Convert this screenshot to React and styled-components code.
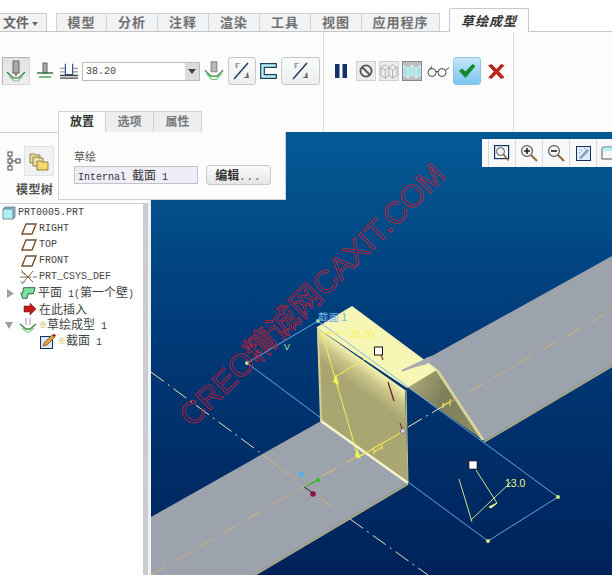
import React from "react";
import styled, { createGlobalStyle } from "styled-components";

const GlobalStyle = createGlobalStyle`
  html, body { margin: 0; padding: 0; background: #fcfcfc; }
  body { width: 612px; height: 575px; overflow: hidden; font-family: "Liberation Mono", "Noto Sans CJK SC", monospace; }
`;

const Page = styled.div`
  position: relative;
  width: 612px;
  height: 575px;
  display: flex;
  flex-direction: column;
  overflow: hidden;
`;

/* top ribbon tabs */
const TabStrip = styled.div`
  height: 32px;
  box-sizing: border-box;
  display: flex;
  align-items: flex-end;
  border-bottom: 1px solid #c4c6c8;
  background: #fff;
`;

const FileTab = styled.div`
  width: 47px;
  height: 19px;
  margin-bottom: -1px;
  margin-right: 9px;
  box-sizing: border-box;
  border: 1px solid #c8cacc;
  border-left: 0;
  border-bottom-color: #c4c6c8;
  background: #f3f3f3;
  color: #666;
  font: 700 13px "Noto Sans CJK SC", sans-serif;
  line-height: 16px;
  padding-left: 3px;
  white-space: nowrap;
`;

const Caret = styled.span`
  display: inline-block;
  width: 0;
  height: 0;
  margin-left: 3px;
  vertical-align: 1px;
  border-left: 3px solid transparent;
  border-right: 3px solid transparent;
  border-top: 4px solid #666;
`;

const Tab = styled.div`
  width: ${(p) => p.$w || 51}px;
  height: 19px;
  margin-bottom: -1px;
  box-sizing: border-box;
  border: 1px solid #d0d2d4;
  border-left-width: ${(p) => (p.$first ? 1 : 0)}px;
  border-bottom-color: #c4c6c8;
  background: #f1f2f3;
  color: #707070;
  text-align: center;
  font: 700 13px/16px "Noto Sans CJK SC", sans-serif;
  letter-spacing: 1px;
`;

const ActiveTab = styled.div`
  width: 80px;
  height: 24px;
  margin-left: 9px;
  margin-bottom: -1px;
  box-sizing: border-box;
  border: 1px solid #c8cacc;
  border-bottom: 0;
  border-radius: 2px 2px 0 0;
  background: #fcfcfc;
  color: #333;
  text-align: center;
  font: italic 700 13px/24px "Noto Sans CJK SC", sans-serif;
  letter-spacing: 1px;
`;

/* ribbon */
const Ribbon = styled.div`
  height: 100px;
  box-sizing: border-box;
  display: flex;
  background: #fcfcfc;
`;

const LeftGroup = styled.div`
  width: 324px;
  box-sizing: border-box;
  border-right: 1px solid #d8dadc;
  display: flex;
  flex-direction: column;
  justify-content: space-between;
`;

const RightGroup = styled.div`
  width: 190px;
  box-sizing: border-box;
  border-right: 1px solid #d8dadc;
  padding: 25px 0 0 7px;
  display: flex;
  align-items: flex-start;
  gap: 3px;
`;

const Controls = styled.div`
  display: flex;
  gap: 4px;
  padding: 25px 0 0 2px;
`;

const Slot = styled.div`
  width: ${(p) => p.$w}px;
  height: 28px;
  display: flex;
  align-items: center;
  justify-content: center;
`;

const RibbonButton = styled.div`
  width: ${(p) => p.$w || 28}px;
  height: 28px;
  box-sizing: border-box;
  display: flex;
  align-items: center;
  justify-content: center;
  border: 1px solid #c6c8ca;
  border-radius: 3px;
  background: linear-gradient(#fafafa, #eceeef);
`;

const PressedButton = styled(RibbonButton)`
  border-radius: 0;
  border-color: #b4b4b4 #d8d8d8 #d8d8d8 #b4b4b4;
  background: linear-gradient(#e2e2e2, #eeeeee);
`;

const OkButton = styled(RibbonButton)`
  border-color: #8cc6ea;
  background: linear-gradient(#c6e6f8, #7cc4ee);
`;

const SquareToggle = styled.div`
  width: 20px;
  height: 20px;
  margin-top: 4px;
  box-sizing: border-box;
  display: flex;
  align-items: center;
  justify-content: center;
  border: 1px solid ${(p) => (p.$on ? "#8a8a8a" : "#d0d0d0")};
  background: ${(p) => (p.$on ? "#bcbcbc" : "#ececec")};
`;

const Combo = styled.div`
  width: 118px;
  height: 19px;
  margin-top: 5px;
  box-sizing: border-box;
  display: flex;
  border: 1px solid #bcbcbc;
  background: #fff;
`;

const ComboValue = styled.div`
  flex: 1;
  padding-left: 3px;
  color: #444;
  font: 10px/17px "Liberation Mono", monospace;
`;

const ComboArrow = styled.div`
  width: 14px;
  display: flex;
  align-items: center;
  justify-content: center;
  background: #dcdcdc;
`;

const SubTabs = styled.div`
  display: flex;
  margin-left: 58px;
  height: 21px;
`;

const SubTab = styled.div`
  width: 48px;
  box-sizing: border-box;
  text-align: center;
  border: 1px solid #cfd1d3;
  border-left-width: ${(p) => (p.$active ? 1 : 0)}px;
  border-bottom: 0;
  background: ${(p) => (p.$active ? "#fcfcfc" : "#eceeef")};
  color: ${(p) => (p.$active ? "#333" : "#777")};
  font: 700 12px/17px "Noto Sans CJK SC", sans-serif;
`;

/* lower area */
const Main = styled.div`
  flex: 1;
  display: flex;
  min-height: 0;
`;

const Sidebar = styled.div`
  width: 151px;
  box-sizing: border-box;
  display: flex;
  flex-direction: column;
  background: #fcfcfc;
  border-top: 1px solid #cfd1d3;
  border-right: 3px solid #eef0f1;
`;

const SideTabs = styled.div`
  height: 30px;
  margin-top: 13px;
  display: flex;
  padding-left: 3px;
`;

const SideTab = styled.div`
  width: ${(p) => p.$w}px;
  display: flex;
  align-items: center;
  justify-content: center;
  box-sizing: border-box;
  background: ${(p) => (p.$muted ? "#f0f1f2" : "transparent")};
  border: ${(p) => (p.$muted ? "1px solid #e0e2e4" : "0")};
`;

const SideTitle = styled.div`
  height: 28px;
  padding-left: 16px;
  box-sizing: border-box;
  color: #555;
  font: 700 12px/26px "Noto Sans CJK SC", sans-serif;
  letter-spacing: 0.4px;
  border-bottom: 1px solid #cfd1d3;
`;

const TreePane = styled.div`
  flex: 1;
  background: #fff;
  padding-top: 1px;
  border-right: 5px solid #c9cdd1;
`;

const TreeRow = styled.div`
  height: 16px;
  display: flex;
  align-items: center;
  gap: 2px;
  padding-left: ${(p) => p.$indent}px;
  color: #444;
  font: 10px/16px "Liberation Mono", monospace;
  white-space: pre;
`;

const Cjk = styled.span`
  font: 12px/16px "Noto Sans CJK SC", sans-serif;
`;

const Asterisk = styled.span`
  margin-right: -2px;
  color: #b39d00;
  font: 700 8px/16px "Noto Sans CJK SC", sans-serif;
`;

const ExpanderGap = styled.span`
  width: 1px;
`;

const Viewport = styled.div`
  position: relative;
  flex: 1;
  background: linear-gradient(#045a95, #003a78 45%, #00225a);
`;

const Scene = styled.svg`
  display: block;
`;

const ViewBar = styled.div`
  position: absolute;
  top: 7px;
  left: 331px;
  width: 130px;
  height: 28px;
  box-sizing: border-box;
  display: flex;
  padding-left: 6px;
  background: #f6f8f9;
`;

const ViewBtn = styled.div`
  width: 27px;
  box-sizing: border-box;
  display: flex;
  align-items: center;
  justify-content: center;
  border-left: 1px solid #d6d8da;
  flex-shrink: 0;
`;

/* dialog panel over the canvas */
const Popup = styled.div`
  position: absolute;
  left: 58px;
  top: 132px;
  width: 228px;
  height: 68px;
  box-sizing: border-box;
  border: 1px solid #cfd1d3;
  border-top: 0;
  background: #fcfcfc;
  padding: 17px 0 0 15px;
`;

const FieldLabel = styled.div`
  color: #555;
  font: 11px/15px "Noto Sans CJK SC", sans-serif;
`;

const FieldRow = styled.div`
  display: flex;
  align-items: center;
  gap: 8px;
  margin-top: 1px;
`;

const SectionField = styled.div`
  width: 124px;
  height: 18px;
  box-sizing: border-box;
  border: 1px solid #c2c2c8;
  background: #f0ecf8;
  color: #333;
  padding-left: 3px;
  font: 10px/16px "Liberation Mono", monospace;
  white-space: nowrap;
`;

const EditButton = styled.div`
  width: 65px;
  height: 20px;
  box-sizing: border-box;
  border: 1px solid #c8c8c8;
  border-radius: 3px;
  background: linear-gradient(#fafafa, #e6e6e6);
  color: #333;
  text-align: center;
  font: 700 12px/17px "Noto Sans CJK SC", sans-serif;
`;

const Dots = styled.span`
  font: 10px/17px "Liberation Mono", monospace;
  letter-spacing: 1.5px;
`;

const BendIcon = ({ size = 24 }) => (
  <svg width={size} height={size} viewBox="0 0 24 24" fill="none">
    <rect x="8.5" y="1" width="7" height="12" fill="#b8b8b8" stroke="#777" />
    <path d="M1 11l7 7h8l7-7" stroke="#2f8a3e" strokeWidth="1.5" />
    <path d="M3 15l6 7h6l6-7" stroke="#7cd07c" strokeWidth="1.5" />
  </svg>
);

const PressedBend = () => (
  <svg width="24" height="24" viewBox="0 0 24 24" fill="none">
    <rect x="9" y="2" width="6" height="12" fill="#a8a8a8" stroke="#666" />
    <path d="M12 14v3" stroke="#333" />
    <path d="M3 13l6 6h6l6-6" stroke="#2f7a3e" strokeWidth="1.2" />
    <path d="M5 17l5 5h4l5-5" stroke="#7cd07c" strokeWidth="1.2" />
  </svg>
);

const BendLineIcon = () => (
  <svg width="18" height="18" viewBox="0 0 18 18" fill="none">
    <rect x="7" y="1" width="4" height="10" fill="#aaa" stroke="#666" />
    <path d="M1 11h16" stroke="#2c6b3a" strokeWidth="1.4" />
    <path d="M3 15h12" stroke="#4aa04f" strokeWidth="1.4" />
  </svg>
);

const BendBlockIcon = () => (
  <svg width="20" height="18" viewBox="0 0 20 18" fill="none">
    <path d="M6 1v12h8V1" stroke="#2f4f8f" strokeWidth="1.3" />
    <path d="M0 6h6M14 6h6M0 10h6M14 10h6" stroke="#777" />
    <path d="M0 14h20M0 17h20" stroke="#444" strokeWidth="1.4" />
  </svg>
);

const FlipIcon = () => (
  <svg width="18" height="18" viewBox="0 0 18 18" fill="none">
    <path d="M1 17L15 1" stroke="#17305f" strokeWidth="1.4" />
    <path d="M2 1h6L3 3zM2 1l1 6 2-3z" fill="#999" />
    <path d="M16 16h-6l4-2zM16 16l-1-6-2 3z" fill="#666" />
  </svg>
);

const ChannelIcon = () => (
  <svg width="17" height="16" viewBox="0 0 17 16">
    <path d="M.7.7h15.6v3.6H4.3v7.4h12v3.6H.7z" fill="#bdeef2" stroke="#17405f" strokeWidth="1.2" />
  </svg>
);

const PauseIcon = () => (
  <svg width="22" height="14" viewBox="0 0 22 14">
    <rect x="4" y="0" width="4.5" height="14" fill="#12306e" />
    <rect x="11.5" y="0" width="4.5" height="14" fill="#12306e" />
  </svg>
);

const BanIcon = () => (
  <svg width="14" height="14" viewBox="0 0 14 14" fill="none" stroke="#555" strokeWidth="1.8">
    <circle cx="7" cy="7" r="5.6" />
    <path d="M3 3l8 8" />
  </svg>
);

const BoxesIcon = () => (
  <svg width="20" height="18" viewBox="0 0 20 18" fill="none" stroke="#999" strokeWidth="0.8">
    <path d="M1 5l5-3 4 3 4-3 5 3v9l-5 3-4-3-4 3-5-3z" />
    <path d="M1 5l5 3 4-3 4 3 5-3M6 8v9M14 8v9M10 5v9" />
  </svg>
);

const BoxesOnIcon = () => (
  <svg width="18" height="16" viewBox="0 0 18 16" stroke="#f2f6f6" strokeWidth="0.7">
    <path d="M0 2l5 3 4-3 4 3 5-3v10l-5 3-4-3-4 3-5-3z" fill="#a9e2e6" />
    <path d="M5 5v10M13 5v10M9 2v10" fill="none" />
  </svg>
);

const GlassesIcon = () => (
  <svg width="22" height="12" viewBox="0 0 22 12" fill="none" stroke="#333" strokeWidth="0.9">
    <circle cx="5" cy="7.5" r="4" />
    <circle cx="15" cy="7.5" r="4" />
    <path d="M9 7q1-1.5 2 0M3 4l2-3M19 5l3-2.5" />
  </svg>
);

const CheckIcon = () => (
  <svg width="18" height="14" viewBox="0 0 18 14">
    <path d="M1 7l3-2.5 3.5 3L14.5 0 17.5 2 7.5 14z" fill="#108a2c" />
  </svg>
);

const CrossIcon = () => (
  <svg width="17" height="15" viewBox="0 0 17 15">
    <path d="M0 1.5L3.5 0l5 5L13 0l3.6 1.2L11 7.3l5.5 6.2-3.6 1.5-4.6-5L3.6 15 .2 13.6 5.8 7.4z" fill="#b8261c" />
  </svg>
);

const SmallArrow = () => (
  <svg width="8" height="5" viewBox="0 0 8 5">
    <path d="M0 0h8L4 5z" fill="#444" />
  </svg>
);

const TreeTabIcon = () => (
  <svg width="14" height="20" viewBox="0 0 14 20" fill="#fff" stroke="#444">
    <rect x="1" y="1" width="4" height="4" />
    <rect x="1" y="8" width="4" height="4" />
    <rect x="1" y="15" width="4" height="4" />
    <rect x="9" y="8" width="4" height="4" />
    <path d="M3 5v3M3 12v3M5 10h4" fill="none" />
  </svg>
);

const FolderTabIcon = () => (
  <svg width="20" height="20" viewBox="0 0 20 20" stroke="#7a6a30" strokeWidth="0.8">
    <path d="M1 3h5l1 1h4v8H1z" fill="#e8dca0" />
    <path d="M4 6h5l1 1h4v8H4z" fill="#efe4a8" />
    <path d="M8 10h4l1 1h6v8H8z" fill="#f4d86c" />
  </svg>
);

const PartIcon = () => (
  <svg width="14" height="14" viewBox="0 0 14 14" stroke="#5a7a86" strokeWidth="0.8">
    <path d="M1 3l2-2h10v10l-2 2z" fill="#8fb8c0" />
    <path d="M1 3h10v10H1z" fill="#aef0f6" />
  </svg>
);

const PlaneIcon = () => (
  <svg width="16" height="12" viewBox="0 0 16 12" fill="#fff" stroke="#7a5230" strokeWidth="1.4">
    <path d="M5 1h10l-4 10H1z" />
  </svg>
);

const CsysIcon = () => (
  <svg width="18" height="16" viewBox="0 0 18 16" fill="none" strokeWidth="0.9">
    <path d="M2 1l12 12M14 2L3 15M1 8h11" stroke="#7a5230" />
    <path d="M1 13h5M2 3l4 3" stroke="#999" />
    <path d="M14 8l4 0" stroke="#666" />
  </svg>
);

const Expander = ({ open }) => (
  <svg width="9" height="9" viewBox="0 0 9 9">
    <path d={open ? "M0 1h8L4 8z" : "M1 0l7 4.5L1 9z"} fill="#9aa0a6" />
  </svg>
);

const WallIcon = () => (
  <svg width="16" height="14" viewBox="0 0 18 14" stroke="#1c5a3a" strokeWidth="1">
    <path d="M4 1h13l-2 7H9l-1 5H3L1 7h2z" fill="#7ee0a0" />
  </svg>
);

const InsertIcon = () => (
  <svg width="14" height="12" viewBox="0 0 14 12">
    <path d="M1 3h6V0l6 6-6 6V9H1z" fill="#c21a1a" stroke="#5a0c0c" strokeWidth="0.5" />
  </svg>
);

const BendTreeIcon = () => (
  <svg width="18" height="16" viewBox="0 0 18 16" fill="none">
    <path d="M7 1v7M11 1v7" stroke="#b48ab4" />
    <path d="M1 7l6 5h4l6-5" stroke="#2f8a3e" strokeWidth="1.3" />
    <path d="M3 11l5 4h2l5-4" stroke="#7cd07c" strokeWidth="1.2" />
  </svg>
);

const SketchIcon = () => (
  <svg width="16" height="15" viewBox="0 0 16 15">
    <rect x="0.5" y="2.5" width="12" height="12" fill="#dce8f0" stroke="#17305f" />
    <path d="M3 12l1-3 8-8 3 2-8 8z" fill="#e0a040" stroke="#5a3010" strokeWidth="0.6" />
    <path d="M12 1l3 2 1-2-2-1z" fill="#b81818" />
  </svg>
);

const ZoomGlass = ({ sign }) => (
  <svg width="18" height="18" viewBox="0 0 18 18" fill="none">
    <circle cx="7" cy="7" r="5.4" stroke="#555" strokeWidth="1.2" fill="#f4f6f8" />
    <path d="M11 11l6 6" stroke="#8a6a3a" strokeWidth="2" />
    <path d={sign === "+" ? "M4 7h6M7 4v6" : "M4 7h6"} stroke="#222" strokeWidth="1.6" />
  </svg>
);

const FitIcon = () => (
  <svg width="16" height="17" viewBox="0 0 16 17" fill="none">
    <rect x="0.6" y="0.6" width="14" height="13" stroke="#17305f" strokeWidth="1.2" />
    <circle cx="6.5" cy="6.5" r="4" stroke="#555" fill="#eef2f4" />
    <path d="M9.5 9.5l5 6" stroke="#8a6a3a" strokeWidth="1.8" />
  </svg>
);

const RepaintIcon = () => (
  <svg width="15" height="15" viewBox="0 0 15 15">
    <rect x="0.5" y="0.5" width="14" height="14" fill="#dcecf4" stroke="#17305f" />
    <path d="M3 12l8-9 2 2-8 8z" fill="#7aa0c8" />
    <path d="M8 2l1 1M5 4l1 1M3 6l1 1" stroke="#888" />
  </svg>
);

const SavedViewIcon = () => (
  <svg width="18" height="14" viewBox="0 0 18 14">
    <path d="M1 3q0-2 2-2h15v12H1z" fill="#f6fafa" stroke="#555" />
    <path d="M1.5 3q0-1.5 2-1.5H18V5H1.5z" fill="#aef0f6" />
  </svg>
);

const Dash = ({ d, color }) => (
  <path d={d} stroke={color} strokeWidth="1" strokeDasharray="16 5 2 5" fill="none" />
);

const Model = () => (
  <Scene width="461" height="443" viewBox="151 132 461 443">
    <defs>
      <linearGradient id="wall" gradientUnits="userSpaceOnUse" x1="361" y1="359" x2="346" y2="380">
        <stop offset="0" stopColor="#f4f2ae" />
        <stop offset="0.45" stopColor="#c8c488" />
        <stop offset="1" stopColor="#a9a672" />
      </linearGradient>
      <linearGradient id="inner" x1="0" y1="0" x2="1" y2="0.4">
        <stop offset="0" stopColor="#b4b07a" />
        <stop offset="0.55" stopColor="#7e7e5c" />
        <stop offset="1" stopColor="#8a8a64" />
      </linearGradient>
    </defs>

    {/* far flat plate */}
    <polygon points="410,368 612,256 612,365 484,441 437,370" fill="#9ca3ac" />
    <path d="M484,442 L612,366" stroke="#aaa988" strokeWidth="2" />
    <polygon points="407,387 437,370 483,440" fill="url(#inner)" />
    <path d="M437,370 L483,440" stroke="#d8d49a" strokeWidth="3" />

    {/* near flat plate */}
    <polygon points="321,421 408,483 253,575 151,575 151,517" fill="#9ca3ac" />
    <path d="M408,484 L253,576" stroke="#aaa988" strokeWidth="2" />

    {/* bent wall */}
    <polygon points="317,328 405,390 408,483 321,421" fill="url(#wall)" />
    <path d="M318,330 L321,421" stroke="#d4d094" strokeWidth="2" />
    <polygon points="352,307 437,370 407,388 317,328" fill="#f8f6b4" />
    <path d="M321,421 L408,483" stroke="#f6f6cc" strokeWidth="2.5" />
    <path d="M317,328 L352,307 L437,370" stroke="#f4f2b8" strokeWidth="1.5" fill="none" />
    <path d="M406,390 L408,483" stroke="#c8c488" strokeWidth="1" />
    <polygon points="402,371 430,356 426,361 436,356 427,364" fill="#a8acb2" />
    <path d="M402,371 L432,357" stroke="#a8acb2" strokeWidth="2" />

    {/* centre lines */}
    <Dash d="M151,575 L322,476" color="#d8ae74" />
    <Dash d="M322,476 L395,436" color="#e8c058" />
    <Dash d="M408,427 L445,405" color="#f2ecb0" />
    <Dash d="M445,405 L495,377 L612,310" color="#d8ae74" />
    <Dash d="M151,372 L262,454" color="#e8e4b8" />
    <path d="M262,454 L295,479 M320,498 L333,507" stroke="#d8ae74" strokeWidth="1" fill="none" />
    <Dash d="M350,519 L428,575" color="#e8e4b8" />

    {/* sketch outline, hidden where the plate passes over it */}
    <path d="M321,418 L247,363 L318,321 L558,497 L488,541 L408,482" stroke="#72b4e8" strokeWidth="0.9" fill="none" />
    <circle cx="247" cy="363" r="2" fill="#c8e880" />
    <circle cx="318" cy="321" r="2" fill="#a8e0a0" />
    <circle cx="558" cy="497" r="2" fill="#c8e880" />
    <circle cx="488" cy="541" r="2" fill="#c8e880" />

    {/* sketch dimensions */}
    <g stroke="#f6f05a" strokeWidth="1" fill="none">
      <path d="M322,333 L358,457" />
      <path d="M323,333 L345,333" />
      <path d="M335,377 L365,359" />
      <path d="M359,457 L402,432" />
      <path d="M356,458 L365,453" />
      <path d="M374,449 L374,454 M382,445 L382,450 M374,452 L382,447" />
      <path d="M443,403 L443,408 M450,399 L450,406 M443,405 L450,402" />
    </g>
    <path d="M336,374 L339,385 L333,382z" fill="#f6f05a" />
    <path d="M357,448 L361,459 L355,456z" fill="#f6f05a" />
    <text x="349" y="338" fill="#f6f05a" fontSize="10" fontFamily="Liberation Sans, sans-serif">38.20</text>
    <text x="318" y="321" fill="#72b4e8" fontSize="10.5" fontFamily="Noto Sans CJK SC, sans-serif">截面 1</text>
    <text x="284" y="350" fill="#a8e880" fontSize="9" fontFamily="Liberation Sans, sans-serif">V</text>

    {/* handles and small marks */}
    <path d="M381,355 L383,360" stroke="#5a1818" />
    <rect x="374.5" y="347" width="8" height="8" fill="#fff" stroke="#111" />
    <path d="M388,382 L394,401" stroke="#6a1c1c" strokeWidth="1.2" />
    <path d="M400,423 L403,431" stroke="#6a1c1c" />
    <circle cx="403" cy="431" r="2.5" fill="#d8ccd8" stroke="#555" strokeWidth="0.6" />

    {/* second dimension */}
    <g stroke="#e4f888" strokeWidth="0.9" fill="none">
      <path d="M459,479 L472,522" />
      <path d="M476,470 L497,503" />
      <path d="M471,520 L511,482" />
    </g>
    <path d="M489,507 L497,503 L491,508z" fill="#e4f888" stroke="#e4f888" />
    <path d="M465,461 L470,464" stroke="#6a1c1c" />
    <rect x="469" y="461" width="8" height="8" fill="#fff" stroke="#111" strokeWidth="0.6" />
    <text x="505" y="487" fill="#e4f888" fontSize="10.5" fontFamily="Liberation Sans, sans-serif">13.0</text>

    {/* part origin */}
    <path d="M306,486 L318,480" stroke="#28b828" strokeWidth="1.2" />
    <circle cx="318" cy="480" r="2" fill="#28c028" />
    <path d="M304,487 L313,493" stroke="#222" />
    <circle cx="313" cy="494" r="2.8" fill="#8c1436" />
    <circle cx="301" cy="474" r="2.8" fill="#58b0e8" />

    {/* watermark */}
    <text
      x="0"
      y="0"
      transform="translate(192,428) rotate(-44.6)"
      fill="none"
      stroke="#d81828"
      strokeWidth="0.7"
      fontSize="31"
      textLength="358"
      lengthAdjust="spacingAndGlyphs"
      fontFamily="Liberation Sans, Noto Sans CJK SC, sans-serif"
    >
      CREO精诚网CAXIT.COM
    </text>
  </Scene>
);

const App = () => {
  return (
    <Page>
      <GlobalStyle />
      <TabStrip>
        <FileTab>
          文件
          <Caret />
        </FileTab>
        <Tab $first>模型</Tab>
        <Tab>分析</Tab>
        <Tab>注释</Tab>
        <Tab>渲染</Tab>
        <Tab>工具</Tab>
        <Tab>视图</Tab>
        <Tab $w={78}>应用程序</Tab>
        <ActiveTab>草绘成型</ActiveTab>
      </TabStrip>

      <Ribbon>
        <LeftGroup>
          <Controls>
            <PressedButton>
              <PressedBend />
            </PressedButton>
            <Slot $w={22}>
              <BendLineIcon />
            </Slot>
            <Slot $w={18}>
              <BendBlockIcon />
            </Slot>
            <Combo>
              <ComboValue>38.20</ComboValue>
              <ComboArrow>
                <SmallArrow />
              </ComboArrow>
            </Combo>
            <Slot $w={20}>
              <BendIcon size={24} />
            </Slot>
            <RibbonButton>
              <FlipIcon />
            </RibbonButton>
            <Slot $w={17}>
              <ChannelIcon />
            </Slot>
            <RibbonButton $w={39}>
              <FlipIcon />
            </RibbonButton>
          </Controls>
          <SubTabs>
            <SubTab $active>放置</SubTab>
            <SubTab>选项</SubTab>
            <SubTab>属性</SubTab>
          </SubTabs>
        </LeftGroup>
        <RightGroup>
          <Slot $w={22}>
            <PauseIcon />
          </Slot>
          <SquareToggle>
            <BanIcon />
          </SquareToggle>
          <SquareToggle>
            <BoxesIcon />
          </SquareToggle>
          <SquareToggle $on>
            <BoxesOnIcon />
          </SquareToggle>
          <Slot $w={25}>
            <GlassesIcon />
          </Slot>
          <OkButton>
            <CheckIcon />
          </OkButton>
          <Slot $w={24}>
            <CrossIcon />
          </Slot>
        </RightGroup>
      </Ribbon>

      <Main>
        <Sidebar>
          <SideTabs>
            <SideTab $w={21}>
              <TreeTabIcon />
            </SideTab>
            <SideTab $w={30} $muted>
              <FolderTabIcon />
            </SideTab>
          </SideTabs>
          <SideTitle>模型树</SideTitle>
          <TreePane>
            <TreeRow $indent={2}>
              <PartIcon />
              PRT0005.PRT
            </TreeRow>
            <TreeRow $indent={21}>
              <PlaneIcon />
              RIGHT
            </TreeRow>
            <TreeRow $indent={21}>
              <PlaneIcon />
              TOP
            </TreeRow>
            <TreeRow $indent={21}>
              <PlaneIcon />
              FRONT
            </TreeRow>
            <TreeRow $indent={19}>
              <CsysIcon />
              PRT_CSYS_DEF
            </TreeRow>
            <TreeRow $indent={6}>
              <Expander />
              <ExpanderGap />
              <WallIcon />
              <span>
                <Cjk>平面</Cjk> 1(<Cjk>第一个壁</Cjk>)
              </span>
            </TreeRow>
            <TreeRow $indent={23}>
              <InsertIcon />
              <Cjk>在此插入</Cjk>
            </TreeRow>
            <TreeRow $indent={5}>
              <Expander open />
              <ExpanderGap />
              <BendTreeIcon />
              <Asterisk>※</Asterisk>
              <span>
                <Cjk>草绘成型</Cjk> 1
              </span>
            </TreeRow>
            <TreeRow $indent={40}>
              <SketchIcon />
              <Asterisk>※</Asterisk>
              <span>
                <Cjk>截面</Cjk> 1
              </span>
            </TreeRow>
          </TreePane>
        </Sidebar>

        <Viewport>
          <Model />
          <ViewBar>
            <ViewBtn>
              <FitIcon />
            </ViewBtn>
            <ViewBtn>
              <ZoomGlass sign="+" />
            </ViewBtn>
            <ViewBtn>
              <ZoomGlass sign="-" />
            </ViewBtn>
            <ViewBtn>
              <RepaintIcon />
            </ViewBtn>
            <ViewBtn>
              <SavedViewIcon />
            </ViewBtn>
          </ViewBar>
        </Viewport>
      </Main>

      <Popup>
        <FieldLabel>草绘</FieldLabel>
        <FieldRow>
          <SectionField>
            Internal <Cjk>截面</Cjk> 1
          </SectionField>
          <EditButton>
            编辑<Dots>...</Dots>
          </EditButton>
        </FieldRow>
      </Popup>
    </Page>
  );
};

export default App;
